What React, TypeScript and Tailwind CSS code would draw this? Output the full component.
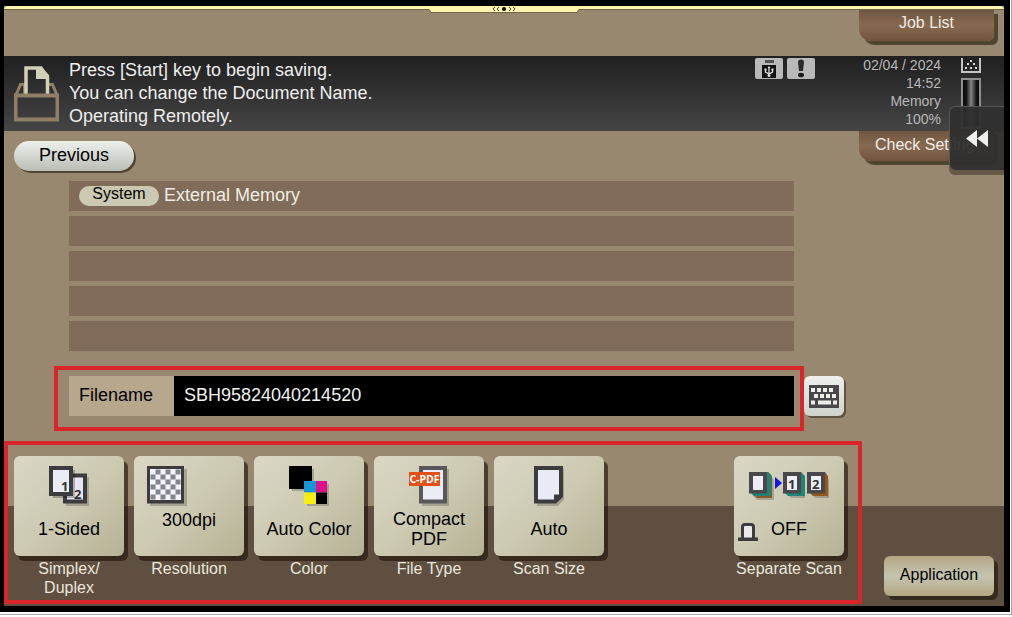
import React, { useState } from 'react';
import { clsx } from 'clsx';

const OneSidedIcon = () => (
  <svg width="40" height="40" viewBox="0 0 40 40">
    <path d="M17 11h23v29H17z" fill="#000" opacity=".2" />
    <path d="M16 9.500h20v26H16z" fill="#e6e6f2" stroke="#3c3c3e" strokeWidth="4" />
    <path d="M26 4v28H4v-2h20V4z" fill="#000" opacity=".25" />
    <path d="M2 2h20v26H2z" fill="#ececf6" stroke="#3c3c3e" strokeWidth="4" />
    <text x="12" y="25" fontSize="13" fontWeight="bold" fontFamily="Open Sans" fill="#333">1</text>
    <text x="25" y="33" fontSize="13" fontWeight="bold" fontFamily="Open Sans" fill="#333">2</text>
  </svg>
);

const ResolutionIcon = () => (
  <svg width="40" height="40" viewBox="0 0 40 40">
    <path d="M3 3h37v37H3z" fill="#000" opacity=".2" />
    <path d="M0 0h37v37.500H0z" fill="#3c3c3e" />
    <path d="M3 3h31v31H3z" fill="#f4f4fa" />
    {Array.from({ length: 36 }, (_, i) => {
      const row = Math.floor(i / 6);
      const col = i % 6;
      return (row + col) % 2 === 0 ? null : (
        <rect key={i} x={3.5 + col * 5} y={3.5 + row * 5} width="5" height="5" fill="#84848e" />
      );
    })}
  </svg>
);

const ColorIcon = () => (
  <svg width="40" height="40" viewBox="0 0 40 40">
    <path d="M3 3h22v22H3zM18 18h23v23H18z" fill="#000" opacity=".2" />
    <path d="M0 0h23v23H0z" />
    <path d="M15 15h12v11.500H15z" fill="#1596d8" />
    <path d="M27 15h11v11.500H27z" fill="#e0108c" />
    <path d="M15 26.500h12v11.500H15z" fill="#f8ee10" />
    <path d="M27 26.500h11v11.500H27z" />
  </svg>
);

const PdfIcon = () => (
  <svg width="40" height="40" viewBox="0 0 40 40">
    <path d="M13 3h28v37H13z" fill="#000" opacity=".2" />
    <path d="M12 2h24v33.500H12z" fill="#ececf4" stroke="#58585a" strokeWidth="4" />
    <rect y="6" width="31" height="14" fill="#e4501a" />
    <text x="15.500" y="17" fontSize="10.500" fontWeight="bold" fontFamily="Open Sans" fill="#fff" textAnchor="middle">C-PDF</text>
  </svg>
);

const SheetIcon = () => (
  <svg width="30" height="40" viewBox="0 0 30 40">
    <path d="M3 3h28v29l-7 8H3z" fill="#000" opacity=".2" />
    <path d="M0 0h29v31l-7 6.500H0z" fill="#3c3c3e" />
    <path d="M4 4h21v24.500h-5v5H4z" fill="#e9ecf6" />
  </svg>
);

const SeparateIcon = () => (
  <svg width="80" height="30" viewBox="0 0 80 30">
    <path d="M4 5l18 0 3 4v20H8l-4-4zM40 5l16 2v20H42l-4-4zM62 5h16l2 4v18H66l-4-4z" fill="#000" opacity=".2" />
    <path d="M5 5l14-4 4 4v22H8l-3-3z" fill="#8a5a28" />
    <path d="M2 2l17-1 3 3v21H5l-3-3z" fill="#1f8378" />
    <path d="M36 2l16-1 4 4v20H39l-3-3z" fill="#1f8378" />
    <path d="M60 2l16-1 3 4v20H64l-3-3z" fill="#96571a" />
    <path d="M0 1h18v21.500H0zM34 1h18v21.500H34zM58 1h18v21.500H58z" fill="#48484a" />
    <path d="M4 5h10v14H4zM38 5h10v14H38zM62 5h10v14H62z" fill="#eeeef4" />
    <path d="M26 6l7 6-7 6z" fill="#1414e0" />
    <text x="39" y="18" fontSize="13" fontWeight="bold" fontFamily="Open Sans" fill="#333">1</text>
    <text x="63" y="18" fontSize="13" fontWeight="bold" fontFamily="Open Sans" fill="#333">2</text>
  </svg>
);

const LampIcon = () => (
  <svg width="20" height="24" viewBox="0 0 20 24">
    <path d="M4.500 22V10q0-2.500 2.500-2.500h6q2.500 0 2.500 2.500v12" fill="#e9e9ee" stroke="#3c3c3e" strokeWidth="3" />
    <path d="M0 20.500h20V24H0z" fill="#3c3c3e" />
  </svg>
);

const BoxIcon = () => (
  <svg width="45" height="56" viewBox="0 0 45 56" className="shrink-0">
    <path d="M2 29L6.500 18.500h4V28M43 29l-4.500-10.500H35" fill="none" stroke="#8f7f67" strokeWidth="3" />
    <path d="M12 28V2h15l6.500 9v17" fill="none" stroke="#d3d0b8" strokeWidth="3.500" />
    <path d="M22 1h5l8 8v4H22z" fill="#d3d0b8" />
    <path d="M1.500 29.500h42v24h-42z" fill="none" stroke="#8f7f67" strokeWidth="4" />
  </svg>
);

const KeyboardIcon = () => (
  <svg width="30" height="23" viewBox="0 0 30 23">
    <path d="M0 0h30v23H0z" fill="#48484a" />
    <path
      d="M2 3h4v4H2zM8 3h4v4H8zM14 3h4v4h-4zM20 3h4v4h-4zM5 9h4v4H5zM11 9h4v4h-4zM17 9h4v4h-4zM23 9h4v4h-4zM2 15.500h4v4H2zM9 15.500h13v4H9zM24 15.500h4v4h-4z"
      fill="#eceeea"
    />
  </svg>
);

const UsbIcon = () => (
  <svg width="28" height="21" viewBox="0 0 28 21">
    <rect width="28" height="21" rx="2" fill="#b9b9b9" />
    <path d="M10 2h9v3h-9z" fill="#555" />
    <path d="M7 7h14v13H7z" fill="#111" />
    <path d="M14 9v9M10.500 11v3l3.500 2 3.500-2v-3" fill="none" stroke="#ddd" strokeWidth="1.300" />
    <path d="M12.500 10L14 8l1.500 2z" fill="#ddd" />
    <circle cx="14" cy="17.500" r="1.500" fill="#ddd" />
    <path d="M9.500 10.500h2v2h-2zM16.500 10.500h2v2h-2z" fill="#ddd" />
  </svg>
);

const AlertIcon = () => (
  <svg width="28" height="21" viewBox="0 0 28 21">
    <rect width="28" height="21" rx="2" fill="#b9b9b9" />
    <path d="M11 4q0-2.500 3-2.500t3 2.500l-1 9h-4z" fill="#2a2a2a" />
    <ellipse cx="14" cy="17" rx="3" ry="2.300" fill="#1c1c1c" />
  </svg>
);

const TonerIcon = () => (
  <svg width="20" height="71" viewBox="0 0 20 71">
    <defs>
      <linearGradient id="gauge">
        <stop offset="0" stopColor="#050505" />
        <stop offset=".25" stopColor="#151515" />
        <stop offset=".5" stopColor="#858585" />
        <stop offset=".8" stopColor="#151515" />
        <stop offset="1" stopColor="#080808" />
      </linearGradient>
    </defs>
    <path d="M1 0v14h18V0" fill="none" stroke="#c4c4c4" strokeWidth="2" />
    <path d="M9 2h2v2H9zM6 5h2v2H6zM12 5h2v2h-2zM4 9h2v2H4zM9 9h2v2H9zM14 9h2v2h-2z" fill="#d8d8d8" />
    <path d="M1 21h18v49H1z" fill="url(#gauge)" stroke="#909090" strokeWidth="2" />
  </svg>
);

interface Setting {
  caption: string;
  value: string;
  icon: React.ReactNode;
  lamp?: boolean;
  raised?: boolean;
}

const settings: Setting[] = [
  { caption: 'Simplex/ Duplex', value: '1-Sided', icon: <OneSidedIcon /> },
  { caption: 'Resolution', value: '300dpi', icon: <ResolutionIcon />, raised: true },
  { caption: 'Color', value: 'Auto Color', icon: <ColorIcon /> },
  { caption: 'File Type', value: 'Compact PDF', icon: <PdfIcon /> },
  { caption: 'Scan Size', value: 'Auto', icon: <SheetIcon /> },
  { caption: 'Separate Scan', value: 'OFF', icon: <SeparateIcon />, lamp: true },
];

const SettingButton = ({ caption, value, icon, lamp, raised }: Setting) => (
  <div className={clsx('flex w-[110px] flex-col items-center', lamp && 'ml-auto')}>
    <button
      aria-label={`${caption} ${value}`}
      className="flex h-[100px] w-full flex-col items-center rounded-md bg-linear-to-br from-[#dad8c5] via-[#cdcab3] to-[#b7b294] pt-2.5 pb-1 shadow-[4px_5px_0_rgba(35,22,12,0.65)]"
    >
      <span className={clsx('flex h-10 shrink-0 justify-center', raised && 'self-start pl-[13px]', lamp && 'items-center')}>
        {icon}
      </span>
      {lamp ? (
        <span className="grid w-full flex-1 grid-cols-[20px_1fr_20px] items-center px-1 text-lg leading-5">
          <LampIcon />
          {value}
        </span>
      ) : (
        <span className={clsx('flex flex-1 text-lg', raised ? 'items-start leading-7' : 'items-center leading-5')}>
          <span className={value === 'Compact PDF' ? 'w-20' : 'whitespace-nowrap'}>{value}</span>
        </span>
      )}
    </button>
    <span className={clsx('pt-[3px] text-center leading-[19px] text-[#ebe6dd]', caption.includes('/') ? 'w-20' : 'whitespace-nowrap')}>
      {caption}
    </span>
  </div>
);

const tabButton =
  'w-[135px] rounded-br-md rounded-bl-xl bg-linear-to-b from-[#705642] via-[#86694f] to-[#70543e] text-[#f0ece6] shadow-[4px_4px_0_#50452f]';

export default function App() {
  const [filename, setFilename] = useState('SBH95824040214520');

  return (
    <div className="border-r border-b border-[#a8a8a8] bg-white pr-px pb-0.5 font-['Liberation_Sans',Arial,sans-serif] text-base">
      <div className="bg-black py-1.5 pr-1.5 pl-1">
        <div className="bg-[linear-gradient(to_top,#5f4f40_100px,#988870_100px)]">
          <header className="relative h-[50px]">
            <div className="h-1 rounded-t-sm border-b border-[#706544] bg-[#fdf5ae]" />
            <svg viewBox="0 0 150 7" className="absolute top-0 left-1/2 h-[7px] w-[150px] -translate-x-1/2">
              <path d="M0 0h150v3l-2 3H2L0 3z" fill="#fdf5ae" />
              <path d="M0 3.500l2 3h146l2-3" fill="none" stroke="#706544" />
              <path d="M66 1l-2 2 2 2M70 1l-2 2 2 2M80 1l2 2-2 2M84 1l2 2-2 2" fill="none" stroke="#443" />
              <circle cx="75" cy="3" r="2" />
            </svg>
            <div className="flex justify-end pr-2.5">
              <button className={clsx(tabButton, 'h-[31px] pb-1.5 leading-6')}>Job List</button>
            </div>
          </header>

          <section className="relative flex h-[75px] items-start bg-linear-to-b from-[#202021] to-[#454545] pr-[23px] pl-2.5">
            <div className="self-center">
              <BoxIcon />
            </div>
            <p className="flex-1 pt-[3px] pl-2.5 text-lg leading-[23px] text-[#eeeeee]">
              Press [Start] key to begin saving.
              <br />
              You can change the Document Name.
              <br />
              Operating Remotely.
            </p>
            <div className="mr-12 flex gap-1 pt-0.5">
              <UsbIcon />
              <AlertIcon />
            </div>
            <div className="mr-5 text-right text-sm leading-[18px] whitespace-nowrap text-[#b8b8b8]">
              02/04 / 2024
              <br />
              14:52
              <br />
              Memory
              <br />
              100%
            </div>
            <div className="pt-0.5">
              <TonerIcon />
            </div>
            <button
              aria-label="Open side panel"
              className="absolute top-[50px] right-0 z-10 flex h-16 w-[55px] items-center justify-center rounded-l-md border-t border-l border-[#555555] bg-[#2f2f2f]/95 shadow-[0_5px_0_rgba(90,78,62,0.8)]"
            >
              <svg width="22" height="18" viewBox="0 0 22 18">
                <path d="M11 0v17L0 8.500zM22 0v17L11 8.500z" fill="#efefef" />
              </svg>
            </button>
          </section>

          <main>
            <div className="flex items-start justify-between pr-2.5 pl-2.5">
              <button className="mt-2.5 h-[30px] w-[120px] rounded-full bg-linear-to-b from-[#eef0ec] to-[#babdb6] pb-0.5 text-lg leading-6 shadow-[2px_2px_0_#4d4434]">
                Previous
              </button>
              <button className={clsx(tabButton, 'h-[30px] pb-0.5 pl-4 text-left leading-6')}>Check Setting</button>
            </div>

            <ul className="flex flex-col gap-[5px] pt-2.5 pr-[210px] pl-[65px]">
              <li className="flex h-[30px] items-center bg-[#806c59] pl-2.5 text-lg text-[#f0ece4]">
                <span className="mr-[5px] h-5 w-20 rounded-full bg-[#cbc9b1] text-center text-base leading-4 text-black">
                  System
                </span>
                <span className="pb-0.5">External Memory</span>
              </li>
              {[2, 3, 4, 5].map(row => (
                <li key={row} className="h-[30px] bg-[#806c59]" />
              ))}
            </ul>

            <div className="flex items-start pt-[15px] pr-40 pl-[50px]">
              <div className="flex flex-1 border-4 border-[#d8262b] pt-1.5 pr-1.5 pb-[11px] pl-[11px] text-lg">
                <label htmlFor="filename" className="h-10 w-[105px] bg-[#b7a78c] pl-2.5 leading-[38px]">
                  Filename
                </label>
                <input
                  id="filename"
                  value={filename}
                  onChange={e => setFilename(e.target.value)}
                  className="h-10 min-w-0 flex-1 bg-black px-2.5 pb-0.5 text-[#f2f2f2] outline-none"
                />
              </div>
              <button
                aria-label="Keyboard"
                className="mt-2.5 flex size-10 items-center justify-center rounded-md bg-linear-to-b from-[#eff0ec] to-[#d0d2cc] shadow-[2px_2px_0_#5e5340]"
              >
                <KeyboardIcon />
              </button>
            </div>

            <div className="flex items-end pt-2.5 pr-2.5">
              <div className="mb-0.5 flex flex-1 gap-2.5 border-4 border-[#d8262b] pt-[11px] pr-3.5 pb-[3px] pl-1.5">
                {settings.map(setting => (
                  <SettingButton key={setting.caption} {...setting} />
                ))}
              </div>
              <button className="mb-2.5 ml-[22px] h-10 w-[110px] rounded-md bg-linear-to-b from-[#b3a582] via-[#c5c5b0] to-[#b3a582] pb-0.5 shadow-[4px_4px_0_#352a1e]">
                Application
              </button>
            </div>
          </main>
        </div>
      </div>
    </div>
  );
}
